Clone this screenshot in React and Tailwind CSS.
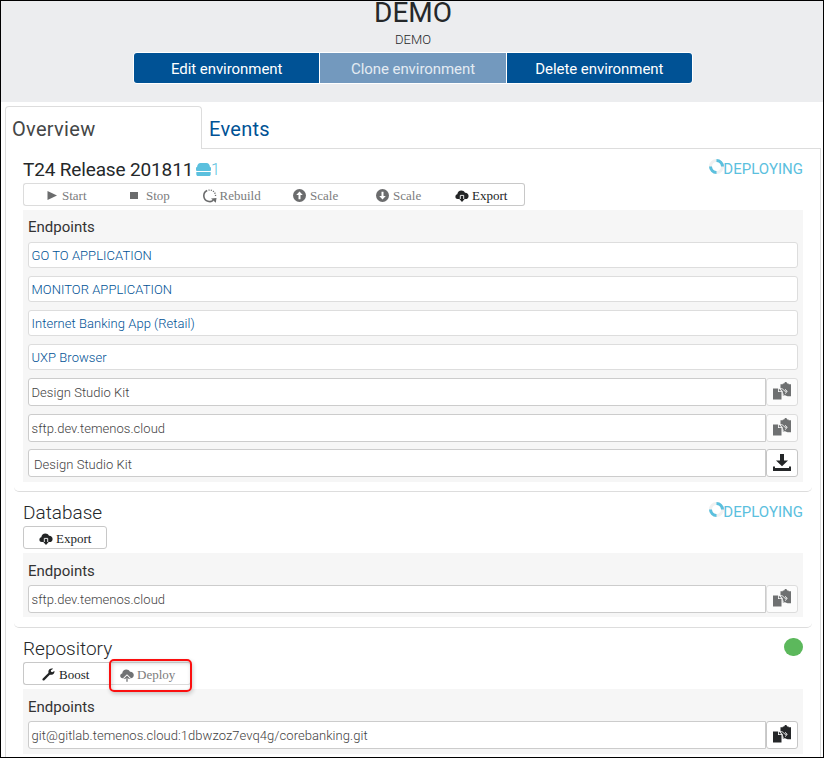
import React from "react";

const roboto = "font-['Roboto',sans-serif]";
const serif = "font-['Liberation_Serif',serif]";

function PlayIcon() {
  return <svg className="mt-[2px] block h-[13px] w-[14px]" viewBox="0 0 14 13" fill="#6b6c6d"><path d="M3.5 2v9L13 6.5z" /></svg>;
}
function StopIcon() {
  return <svg className="mt-px block h-[13px] w-[14px]" viewBox="0 0 14 13" fill="#6b6c6d"><path d="M3 3h8v7H3z" /></svg>;
}
function RebuildIcon() {
  return (
    <svg className="mt-[2px] block h-[14px] w-[14px]" viewBox="0 0 14 14" fill="none" stroke="#6b6c6d">
      <path d="M4.2 1.6A5.7 5.7 0 0 0 5 12.3c2 .7 4 .2 5.200-1" strokeWidth="1.6" />
      <path d="M5.500 1.200A5.700 5.700 0 0 1 12.400 8" strokeWidth="1.3" strokeDasharray="1.200 1.100" />
      <path d="M8 9.500l5.500-.6-.7 4.800z" fill="#6b6c6d" stroke="none" />
    </svg>
  );
}
function ScaleIcon({ down }) {
  return (
    <svg className={"mt-[2px] block h-[13px] w-[13px]" + (down ? " rotate-180" : "")} viewBox="0 0 13 13">
      <circle cx="6.500" cy="6.500" r="6.500" fill="#6b6c6d" />
      <path d="M6.500 2.500L9.800 6H7.500v4.200h-2V6H3.200z" fill="#fff" />
    </svg>
  );
}
function ExportIcon() {
  return (
    <svg className="mt-[3px] block h-[12px] w-[14px]" viewBox="0 0 14 12">
      <path d="M2.800 9C1.300 9 .4 8 .4 6.700c0-1.300.8-2.100 1.900-2.400C2.500 2.200 4.200.5 6.300.5c1.700 0 3 .8 3.700 2.200 2-.2 3.600 1.200 3.600 3.200C13.600 7.800 12.400 9 10.600 9H9.700L7 12 4.300 9z" fill="#222425" />
      <path d="M5.300 9V5.400h3.400V9" fill="none" stroke="#fff" strokeWidth=".9" />
    </svg>
  );
}
function DeployIcon() {
  return (
    <svg className="mt-[3px] block h-[13px] w-[14px]" viewBox="0 0 14 13">
      <path d="M2.600 9.300C1.200 9.300.2 8.200.2 6.800c0-1.200.8-2.100 2-2.400C2.400 2.200 4.200.5 6.300.5c1.700 0 3 .8 3.700 2.200 2-.2 3.800 1.200 3.800 3.300 0 1.900-1.200 3.300-3 3.300z" fill="#707274" />
      <path d="M7 13V7.500M4.200 9.600L7 6.800l2.800 2.800" fill="none" stroke="#fff" strokeWidth="2.300" />
      <path d="M7 12.800V7.500M4.500 9.900L7 7.400l2.500 2.500" fill="none" stroke="#707274" strokeWidth="1.300" />
    </svg>
  );
}
function WrenchIcon() {
  return (
    <svg className="mt-px block h-[13px] w-[13px]" viewBox="0 0 13 13">
      <path d="M1.600 11.400L8.200 4.800" stroke="#222425" strokeWidth="2.300" strokeLinecap="round" />
      <path d="M12.400 2.900L10.100 4.300 8.900 3.600 8.900 2.200 11.200.8C9.400-.1 7.300.6 6.600 2.400c-.9 2.400.9 4.600 3 4.400 2-.1 3.200-2.100 2.800-3.900z" fill="#222425" />
    </svg>
  );
}
function PasteIcon({ dark }) {
  return (
    <svg className={"mb-[2px] block h-[18px] w-[18px] " + (dark ? "text-[#242628]" : "text-[#6e7071]")} viewBox="0 0 18 18" fill="currentColor">
      <path d="M0 6.500h5V10h3.500v7.500H0z" />
      <path d="M5.800 6.500l2.700 2.700H5.800z" />
      <path d="M7.500 2.300h2.300V1.500h1.400C11.400.5 12 0 12.700 0s1.300.5 1.500 1.500h1.400v.8H18v12h-3.500L12 13.200l-2.200.2V9.500L7.500 7z" />
      <path d="M7 6.700h1.500c2 0 2.300 2.800 5 2.800M12.200 7.200l2 2.300-2.200 2.100M9.500 12.200h1.300" fill="none" stroke="#fff" strokeWidth=".9" />
    </svg>
  );
}
function DownloadIcon() {
  return (
    <svg className="mb-[2px] block h-[18px] w-[18px]" viewBox="0 0 18 18" fill="#242628">
      <path d="M7 1h4v6.500h4L9 13.300 3 7.500h4z" />
      <path d="M0 13.500h2V15h14v-1.500h2V18H0z" />
    </svg>
  );
}
function BurgerIcon() {
  return (
    <svg className="block h-[13px] w-[15px]" viewBox="0 0 15 13" fill="#5bc0de">
      <path d="M1 4.500C1 2 2.500 0 4.500 0h6C12.500 0 14 2 14 4.500z" />
      <rect x="0" y="4" width="15" height="4" rx="1" />
      <path d="M.3 9h14.400v2.200c0 1-.7 1.800-1.700 1.800H2c-1 0-1.700-.8-1.700-1.800z" />
    </svg>
  );
}
function Spinner() {
  return (
    <svg className="mr-[-1px] block h-[16px] w-[15px]" viewBox="0 0 15 16" fill="none" strokeWidth="3">
      <circle cx="7.500" cy="8.500" r="6" stroke="#f1f1f1" />
      <path d="M7.500 2.500a6 6 0 0 1 6 6M7.500 14.500a6 6 0 0 1-6-6" stroke="#5bc0de" />
    </svg>
  );
}

function ToolButton({ icon, label, cls, active }) {
  return (
    <div className={"flex h-full items-center border-y " + cls + (active ? " border-[#c8c8c8] text-[#222425]" : " border-[#dcdcdc] text-[#7b7c7d]")}>
      {icon}
      <span className={"pt-[3px] text-[13px] leading-[16px] " + serif}>{label}</span>
    </div>
  );
}

function LinkRow({ children }) {
  return (
    <div className="flex h-[26px] items-center rounded-[3px] border border-[#dddddd] bg-white pl-[2.5px] pt-[2px] text-[13px] font-light tracking-[0.04px] text-[#005295]">
      {children}
    </div>
  );
}

function CopyRow({ children, kind, cls = "" }) {
  const active = kind !== "disabled";
  const download = kind === "download";
  return (
    <div className={"flex h-[28px] " + cls}>
      <div className={"flex w-[738px] items-center rounded-l-[3px] border border-[#cccccc] bg-white text-[13px] font-light tracking-[0.05px] text-[#3f4142] " + (download ? "pl-[5px]" : "pl-[2.5px]")}>
        <span className={download ? "pt-[3px]" : "pt-px"}>{children}</span>
      </div>
      <div className={"flex w-[32px] items-center justify-center rounded-[3px] border " + (active ? "border-[#c6c6c6] bg-white" : "border-[#dddddd] bg-[#fcfcfc]")}>
        {download ? <DownloadIcon /> : <PasteIcon dark={active} />}
      </div>
    </div>
  );
}

function Deploying() {
  return (
    <div className="flex items-start text-[#5bc0de]">
      <Spinner />
      <span className="pt-[2px] text-[15px] leading-[18px] tracking-[0.02px]">DEPLOYING</span>
    </div>
  );
}

export default function App() {
  return (
    <div className={"h-[758px] w-[824px] overflow-hidden border border-black bg-white text-[#333] " + roboto}>
      <header className="flex h-[101px] flex-col items-center bg-[#ecedef] pl-[2px]">
        <h1 className="h-[28px] text-[28px] leading-[24px] text-[#25282a]">DEMO</h1>
        <p className="mt-[3px] text-[13px] font-light leading-[16px] text-[#25282a]">DEMO</p>
        <div className="mt-[4px] flex h-[32px] w-[560px] gap-px rounded-[4px] border border-white bg-white text-[15px] tracking-[-0.06px] text-white">
          <div className="flex flex-1 items-center justify-center rounded-l-[3px] bg-[#005295] pt-[2px]">Edit environment</div>
          <div className="flex flex-1 items-center justify-center bg-[#7399be] pt-[2px] text-[#e3ebf2]">Clone environment</div>
          <div className="flex flex-1 items-center justify-center rounded-r-[3px] bg-[#005295] pt-[2px]">Delete environment</div>
        </div>
      </header>

      <nav className="ml-[4px] mt-[4px] flex h-[43px] w-[816px] text-[20px] tracking-[0.3px]">
        <div className="flex w-[197px] items-center rounded-t-[4px] border border-b-0 border-[#dddddd] pl-[6px] pt-px text-[#444647]">Overview</div>
        <div className="flex flex-1 items-center border-b border-[#dddddd] pl-[7px] pt-[4px] text-[#005295]">Events</div>
      </nav>

      <main className="ml-[4px] h-[609px] w-[816px] border-x border-[#dddddd] pl-[8px]">
        <section className="h-[343px] w-[798px] rounded-b-[5px] border-b border-[#dddddd] pl-[9px] pr-[9px]">
          <div className="flex h-[34px] justify-between pt-[9px]">
            <div className="flex items-start">
              <h2 className="w-[169px] whitespace-nowrap text-[19px] leading-[23px] text-[#25282a] tracking-[-0.15px]">T24 Release 201811</h2>
              <div className="ml-[4px] mt-[5px]"><BurgerIcon /></div>
              <span className="mt-[3px] text-[16px] font-light leading-[18px] text-[#5bc0de]">1</span>
            </div>
            <Deploying />
          </div>
          <div className="flex h-[23px] w-[502px] overflow-hidden">
            <ToolButton cls="w-[84px] gap-[4px] rounded-l-[3px] border-l pl-[20px]" icon={<PlayIcon />} label="Start" />
            <ToolButton cls="w-[83px] gap-[5px] pl-[20px]" icon={<StopIcon />} label="Stop" />
            <ToolButton cls="w-[84px] gap-[3px] pl-[12.5px]" icon={<RebuildIcon />} label="Rebuild" />
            <ToolButton cls="w-[83px] gap-[4px] pl-[19px]" icon={<ScaleIcon />} label="Scale" />
            <ToolButton cls="w-[83px] gap-[4px] pl-[19px]" icon={<ScaleIcon down />} label="Scale" />
            <ToolButton cls="w-[85px] gap-[3px] rounded-r-[3px] border-r pl-[15px]" icon={<ExportIcon />} label="Export" active />
          </div>
          <div className="mt-[4px] h-[272px] bg-[#f6f6f6] px-[5px] pt-[8px]">
            <h3 className="h-[24px] text-[15px] leading-[18px]">Endpoints</h3>
            <div className="flex flex-col gap-[8px]">
              <LinkRow>GO TO APPLICATION</LinkRow>
              <LinkRow>MONITOR APPLICATION</LinkRow>
              <LinkRow>Internet Banking App (Retail)</LinkRow>
              <LinkRow>UXP Browser</LinkRow>
              <CopyRow kind="disabled">Design Studio Kit</CopyRow>
              <CopyRow kind="disabled">sftp.dev.temenos.cloud</CopyRow>
              <CopyRow kind="download" cls="mt-[-1px]">Design Studio Kit</CopyRow>
            </div>
          </div>
        </section>

        <section className="h-[136px] w-[798px] rounded-b-[5px] border-b border-[#dddddd] pl-[9px] pr-[9px]">
          <div className="flex h-[34px] justify-between pt-[9px]">
            <h2 className="text-[19px] font-light leading-[23px] text-[#25282a]">Database</h2>
            <Deploying />
          </div>
          <div className="flex h-[23px] w-[84px]">
            <ToolButton cls="w-[84px] gap-[3px] rounded-[3px] border-x pl-[15px]" icon={<ExportIcon />} label="Export" active />
          </div>
          <div className="mt-[4px] h-[64px] bg-[#f6f6f6] px-[5px] pt-[9px]">
            <h3 className="h-[23px] text-[15px] leading-[18px]">Endpoints</h3>
            <CopyRow kind="disabled">sftp.dev.temenos.cloud</CopyRow>
          </div>
        </section>

        <section className="w-[798px] pl-[9px] pr-[9px]">
          <div className="flex h-[34px] justify-between pt-[9px]">
            <h2 className="text-[19px] font-light leading-[23px] text-[#25282a]">Repository</h2>
            <div className="mt-px h-[18px] w-[19px] rounded-full bg-[#5cb85c]" />
          </div>
          <div className="relative flex h-[23px] w-[168px]">
            <ToolButton cls="w-[87px] gap-[4px] rounded-l-[3px] border-l pl-[18px]" icon={<WrenchIcon />} label="Boost" active />
            <ToolButton cls="w-[81px] gap-[3px] rounded-r-[3px] border-r pl-[10px]" icon={<DeployIcon />} label="Deploy" />
            <div className="absolute left-[86px] top-[-3px] z-10 h-[33px] w-[83px] rounded-[5px] border-2 border-[#fb0f0f] shadow-[1px_2px_4px_rgba(0,0,0,0.2),inset_1px_2px_4px_rgba(0,0,0,0.18)]" />
          </div>
          <div className="mt-[4px] h-[65px] bg-[#f6f6f6] px-[5px] pt-[9px]">
            <h3 className="h-[23px] text-[15px] leading-[18px]">Endpoints</h3>
            <CopyRow kind="copy">git@gitlab.temenos.cloud:1dbwzoz7evq4g/corebanking.git</CopyRow>
          </div>
        </section>
      </main>
    </div>
  );
}
